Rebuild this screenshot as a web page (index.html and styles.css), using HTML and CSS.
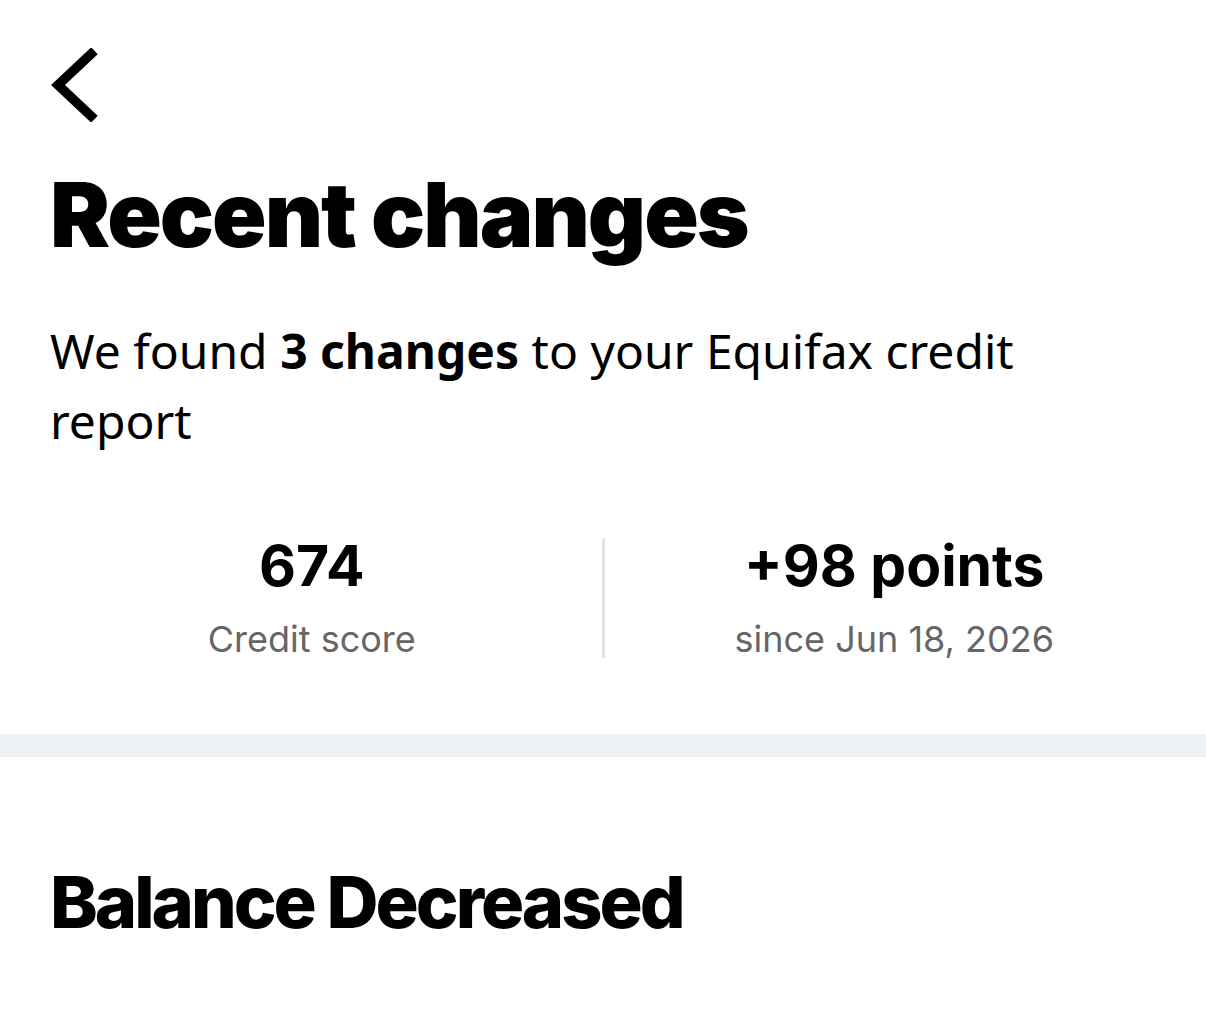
FILE: index.html
```html
<!DOCTYPE html>
<html lang="en">
<head>
<meta charset="utf-8">
<title>Recent changes</title>
<link rel="stylesheet" href="styles.css">
</head>
<body>
  <main class="page">
    <header class="top">
      <button class="back" aria-label="Back">
        <svg width="48" height="74" viewBox="0 0 48 74" fill="none">
          <path d="M41 6 L8 37 L41 68" stroke="#000" stroke-width="9.5" stroke-linecap="square" stroke-linejoin="miter"/>
        </svg>
      </button>
      <h1 class="title">Recent changes</h1>
      <p class="intro">We found <strong>3 changes</strong> to your Equifax credit report</p>
    </header>

    <section class="stats">
      <div class="stat">
        <div class="stat-value">674</div>
        <div class="stat-label">Credit score</div>
      </div>
      <div class="stat-divider"></div>
      <div class="stat">
        <div class="stat-value">+98 points</div>
        <div class="stat-label">since Jun 18, 2026</div>
      </div>
    </section>

    <div class="band"></div>

    <section class="change">
      <h2 class="change-title">Balance Decreased</h2>
    </section>
  </main>
</body>
</html>
```

FILE: styles.css
```css
html, body {
  margin: 0;
  padding: 0;
  background: #fff;
  color: #000;
}

.page {
  width: 1206px;
  font-family: "Noto Sans", "Open Sans", sans-serif;
}

.top {
  padding: 48px 50px 0;
}

.back {
  display: block;
  margin: 0;
  padding: 0;
  border: 0;
  background: none;
  width: 48px;
  height: 74px;
}

.back svg {
  display: block;
}

.title {
  margin: 38px 0 0;
  font-family: Inter, sans-serif;
  font-weight: 900;
  font-size: 90px;
  line-height: 110px;
  letter-spacing: -2px;
}

.intro {
  margin: 46px 0 0;
  font-size: 48px;
  line-height: 70px;
  font-weight: 400;
  max-width: 1040px;
}

.intro strong {
  font-weight: 700;
}

.stats {
  display: flex;
  align-items: center;
  padding: 0 22px;
  margin-top: 78px;
}

.stat {
  flex: 1;
  text-align: center;
  font-family: Inter, sans-serif;
}

.stat-value {
  font-weight: 700;
  font-size: 57px;
  line-height: 64px;
}

.stat-label {
  margin-top: 18px;
  font-size: 36px;
  line-height: 46px;
  color: #666;
}

.stat-divider {
  width: 3px;
  height: 120px;
  background: #e4e4e4;
}

.band {
  margin-top: 72px;
  height: 23px;
  background: #eef1f5;
}

.change {
  padding: 0 50px;
}

.change-title {
  margin: 100px 0 0;
  font-family: Inter, sans-serif;
  font-weight: 800;
  font-size: 72px;
  line-height: 90px;
  letter-spacing: -3px;
}
```
